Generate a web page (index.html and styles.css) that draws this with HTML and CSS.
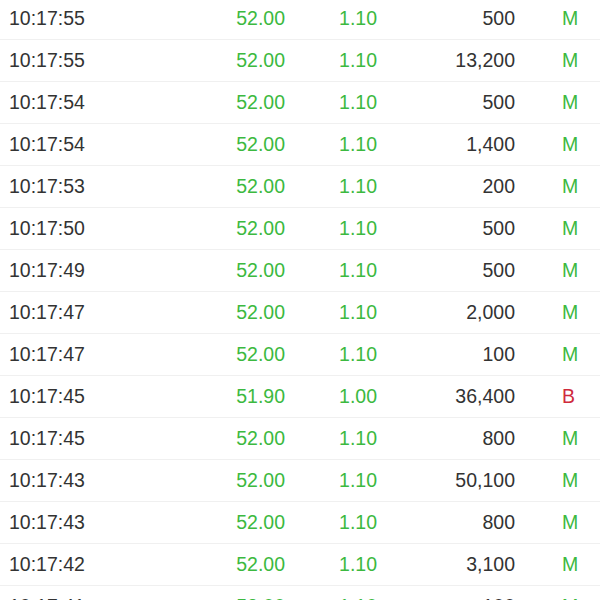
FILE: index.html
```html
<!DOCTYPE html>
<html>
<head>
<meta charset="utf-8">
<link rel="stylesheet" href="styles.css">
</head>
<body>
<div class="list">
  <div class="row"><span class="time">10:17:55</span><span class="price up">52.00</span><span class="chg up">1.10</span><span class="vol">500</span><span class="flag up">M</span></div>
  <div class="row"><span class="time">10:17:55</span><span class="price up">52.00</span><span class="chg up">1.10</span><span class="vol">13,200</span><span class="flag up">M</span></div>
  <div class="row"><span class="time">10:17:54</span><span class="price up">52.00</span><span class="chg up">1.10</span><span class="vol">500</span><span class="flag up">M</span></div>
  <div class="row"><span class="time">10:17:54</span><span class="price up">52.00</span><span class="chg up">1.10</span><span class="vol">1,400</span><span class="flag up">M</span></div>
  <div class="row"><span class="time">10:17:53</span><span class="price up">52.00</span><span class="chg up">1.10</span><span class="vol">200</span><span class="flag up">M</span></div>
  <div class="row"><span class="time">10:17:50</span><span class="price up">52.00</span><span class="chg up">1.10</span><span class="vol">500</span><span class="flag up">M</span></div>
  <div class="row"><span class="time">10:17:49</span><span class="price up">52.00</span><span class="chg up">1.10</span><span class="vol">500</span><span class="flag up">M</span></div>
  <div class="row"><span class="time">10:17:47</span><span class="price up">52.00</span><span class="chg up">1.10</span><span class="vol">2,000</span><span class="flag up">M</span></div>
  <div class="row"><span class="time">10:17:47</span><span class="price up">52.00</span><span class="chg up">1.10</span><span class="vol">100</span><span class="flag up">M</span></div>
  <div class="row"><span class="time">10:17:45</span><span class="price up">51.90</span><span class="chg up">1.00</span><span class="vol">36,400</span><span class="flag down">B</span></div>
  <div class="row"><span class="time">10:17:45</span><span class="price up">52.00</span><span class="chg up">1.10</span><span class="vol">800</span><span class="flag up">M</span></div>
  <div class="row"><span class="time">10:17:43</span><span class="price up">52.00</span><span class="chg up">1.10</span><span class="vol">50,100</span><span class="flag up">M</span></div>
  <div class="row"><span class="time">10:17:43</span><span class="price up">52.00</span><span class="chg up">1.10</span><span class="vol">800</span><span class="flag up">M</span></div>
  <div class="row"><span class="time">10:17:42</span><span class="price up">52.00</span><span class="chg up">1.10</span><span class="vol">3,100</span><span class="flag up">M</span></div>
  <div class="row"><span class="time">10:17:41</span><span class="price up">52.00</span><span class="chg up">1.10</span><span class="vol">100</span><span class="flag up">M</span></div>
</div>
</body>
</html>
```
FILE: styles.css
```css
html, body {
  margin: 0;
  padding: 0;
  background: #ffffff;
  overflow: hidden;
}
body {
  font-family: "Liberation Sans", Arial, sans-serif;
  font-size: 19.5px;
  color: #333333;
}
.list {
  margin-top: -2px;
}
.row {
  display: grid;
  grid-template-columns: 191px 85px 92px 138px 1fr;
  align-items: center;
  height: 42px;
  box-sizing: border-box;
  padding-left: 9px;
  border-bottom: 1px solid #f0f0f0;
}
.price, .chg, .vol {
  text-align: right;
}
.flag {
  padding-left: 47px;
}
.up {
  color: #3cb940;
}
.down {
  color: #cf2a3c;
}
```
